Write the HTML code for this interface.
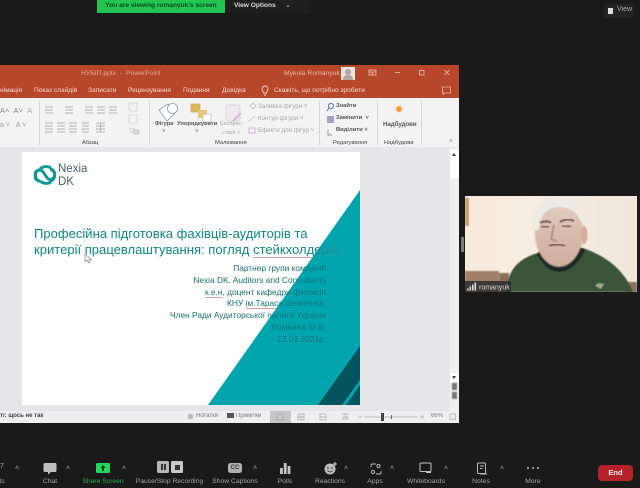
<!DOCTYPE html>
<html><head><meta charset="utf-8"><style>
html,body{margin:0;padding:0;background:#1a1a1a;width:640px;height:488px;overflow:hidden}
body{position:relative;font-family:"Liberation Sans","Noto Sans CJK SC",sans-serif}
.a{position:absolute;white-space:nowrap}
.b{filter:blur(.3px)}
.rt{color:#f3d6cc;font-size:6.6px}
.gt{color:#444;font-size:5.8px}
.dis{color:#a8a8a8;font-size:6.2px}
.tl{color:#a4a4a4;font-size:6.75px;transform:translateX(-50%);top:478px;filter:blur(.3px)}
.car{color:#aaa;font-size:7px;top:465px}
.sep{position:absolute;top:101px;width:1px;height:44px;background:#d6d6d6}
</style></head><body>
<!-- top bar -->
<div class="a" style="left:97px;top:0;width:214px;height:13px;background:#1f1f1f;border-radius:0 0 3px 3px"></div>
<div class="a b" style="left:97px;top:0;width:128px;height:13px;background:#23c552;color:#0b4a1e;font-size:6.6px;font-weight:bold;line-height:12px;text-align:center">You are viewing romanyuk's screen</div>
<div class="a b" style="left:234px;top:0;color:#ddd;font-size:6.6px;font-weight:bold;line-height:12px">View Options</div>
<div class="a" style="left:285px;top:1px;color:#ccc;font-size:7px;line-height:10px">⌄</div>
<div class="a" style="left:604px;top:4px;width:30px;height:14px;background:#242424;border-radius:4px"></div>
<div class="a" style="left:608px;top:8px;width:5px;height:6px;background:#ddd"></div>
<div class="a b" style="left:617px;top:6px;color:#aaa;font-size:7px">View</div>

<!-- window -->
<div class="a" style="left:0;top:65px;width:459px;height:358px;background:#e6e6e6"></div>
<div class="a" style="left:0;top:65px;width:459px;height:33px;background:#b7472a"></div>
<div class="a b" style="left:81px;top:70px;color:#e2a896;font-size:6.8px">НУБІП.pptx &nbsp;-&nbsp; PowerPoint</div>
<div class="a b" style="left:284px;top:70px;color:#eab9a9;font-size:6.8px">Mykola Romanyuk</div>
<div class="a" style="left:341px;top:67px;width:14px;height:13px;background:#e8e4e2"></div>
<svg class="a b" style="left:341px;top:67px" width="14" height="13"><circle cx="7" cy="5" r="3" fill="#b5a5a0"/><path d="M2 13c0-4 2-5 5-5s5 1 5 5z" fill="#b5a5a0"/></svg>
<svg class="a b" style="left:366px;top:68px" width="90" height="12" fill="none" stroke="#eec4b6" stroke-width=".8"><rect x="3" y="2" width="7" height="5"/><path d="M3 4h7M6.500 4v3"/><path d="M29 4.500h5"/><rect x="53.500" y="2.500" width="4.500" height="4.500"/><path d="M78.500 2l5 5M83.500 2l-5 5"/></svg>
<!-- tabs -->
<div class="a b rt" style="left:0;top:87px">німація</div>
<div class="a b rt" style="left:34px;top:87px">Показ слайдів</div>
<div class="a b rt" style="left:88px;top:87px">Записати</div>
<div class="a b rt" style="left:128px;top:87px">Рецензування</div>
<div class="a b rt" style="left:183px;top:87px">Подання</div>
<div class="a b rt" style="left:222px;top:87px">Довідка</div>
<svg class="a b" style="left:260px;top:85px" width="10" height="12" fill="none" stroke="#f3d6cc" stroke-width=".9"><path d="M3.500 8c0-1.500-1.500-2-1.500-4a3 3 0 0 1 6 0c0 2-1.500 2.500-1.500 4zM4 10h2"/></svg>
<div class="a b rt" style="left:274px;top:87px">Скажіть, що потрібно зробити</div>
<svg class="a b" style="left:441px;top:86px" width="12" height="10" fill="none" stroke="#e8b3a2" stroke-width=".8"><path d="M1.500 1h8v6H4L2.500 8.500V7h-1z"/></svg>
<!-- ribbon -->
<div class="a" style="left:0;top:98px;width:459px;height:49px;background:#f3f3f3"></div>
<div class="sep" style="left:39px"></div><div class="sep" style="left:149px"></div><div class="sep" style="left:319px"></div><div class="sep" style="left:377px"></div><div class="sep" style="left:421px"></div>
<!-- font group bits -->
<div class="a b" style="left:0;top:106px;color:#888;font-size:7.5px">А˄ &nbsp;А˅ &nbsp;<span style="color:#aaa">А</span></div>
<div class="a b" style="left:0;top:122px;color:#999;font-size:7px">а ˅ &nbsp; А ˅</div>
<!-- paragraph icons -->
<svg class="a b" style="left:44px;top:104px" width="80" height="30" stroke="#b4b4b4" stroke-width="1" fill="none">
<path d="M1 3h8M1 6h8M1 9h8M21 3h8M21 6h8M21 9h8M41 3h8M41 6h8M41 9h8M53 3h8M53 6h8M53 9h8M65 3h8M65 6h8M65 9h8"/>
<path d="M1 19h8M1 22h8M1 25h8M1 28h8M13 19h8M13 22h8M13 25h8M13 28h8M25 19h8M25 22h8M25 25h8M25 28h8M38 19h7M38 22h7M38 25h7M38 28h7M52 19h9M52 22h9M52 25h9M52 28h9M56.500 19v9"/>
</svg>
<svg class="a b" style="left:126px;top:100px" width="20" height="38" fill="none" stroke="#bbb" stroke-width=".8"><rect x="3" y="3" width="8" height="8" stroke-dasharray="1.500 1"/><rect x="3" y="15" width="8" height="8" stroke-dasharray="1.500 1"/><path d="M3 29h6M3 32h6"/><rect x="8" y="30" width="5" height="4" fill="#ddd"/></svg>
<div class="a b gt" style="left:82px;top:140px">Абзац</div>
<!-- drawing -->
<svg class="a b" style="left:154px;top:101px" width="92" height="28"><path d="M5 9l9-6 8 8-9 9z" fill="#fff" stroke="#8a9ab0" stroke-width=".8"/><circle cx="18.500" cy="7.500" r="5" fill="#fff" stroke="#8a9ab0" stroke-width=".8"/><rect x="37" y="3" width="9" height="8" fill="#d9b95f" stroke="#c9a64c" stroke-width=".6"/><rect x="44" y="9" width="9" height="8" fill="#e6c878"/><rect x="49" y="13" width="8" height="8" fill="#fff" stroke="#aaa" stroke-width=".6"/><rect x="72" y="4" width="14" height="16" rx="2" fill="#f1e9f0" stroke="#ccc" stroke-width=".7"/><path d="M79 20l8-8" stroke="#d4b8d0" stroke-width="2"/></svg>
<div class="a b gt" style="left:155px;top:121px;font-weight:bold;color:#555;font-size:5.6px">Фігури</div>
<div class="a b gt" style="left:177px;top:121px;font-weight:bold;color:#555;font-size:5.8px">Упорядкувати</div>
<div class="a b dis" style="left:220px;top:121px;font-size:5.8px">Експрес-</div>
<div class="a b dis" style="left:222px;top:130px;font-size:5.8px">стилі ˅</div>
<div class="a b" style="left:162px;top:129px;font-size:6px;color:#666">˅</div>
<div class="a b" style="left:195px;top:129px;font-size:6px;color:#666">˅</div>
<div class="a b dis" style="left:258px;top:103px">Заливка фігури ˅</div>
<div class="a b dis" style="left:258px;top:115px">Контур фігури ˅</div>
<div class="a b dis" style="left:258px;top:127px">Ефекти для фігур ˅</div>
<svg class="a b" style="left:248px;top:101px" width="9" height="36" fill="none" stroke="#bbb" stroke-width=".8"><path d="M2 5l3-3 3 3-3 3z"/><path d="M1 20l6-5"/><rect x="1" y="27" width="6" height="5" stroke="#caa6c6"/></svg>
<div class="a b gt" style="left:215px;top:140px">Малювання</div>
<!-- editing -->
<svg class="a b" style="left:326px;top:102px" width="10" height="36" fill="none"><circle cx="5" cy="4" r="2.500" stroke="#3f6fb5"/><path d="M3 6L1 9" stroke="#3f6fb5"/><rect x="1" y="14" width="7" height="7" fill="#a8a0c8"/><path d="M2 27v7l2-2 2 2" stroke="#888" stroke-width=".7"/></svg>
<div class="a b gt" style="left:336px;top:103px;font-weight:bold;color:#555">Знайти</div>
<div class="a b gt" style="left:336px;top:115px;font-weight:bold;color:#555">Замінити &nbsp;˅</div>
<div class="a b gt" style="left:336px;top:127px;font-weight:bold;color:#555">Виділити ˅</div>
<div class="a b gt" style="left:333px;top:140px">Редагування</div>
<div class="a" style="left:396px;top:106px;width:6px;height:6px;background:#f59a30;border-radius:50%;filter:blur(.5px)"></div>
<div class="a b gt" style="left:383px;top:121px;font-weight:bold;color:#555;font-size:6.1px">Надбудови</div>
<div class="a b gt" style="left:384px;top:140px">Надбудови</div>
<div class="a" style="left:449px;top:139px;color:#777;font-size:6px">˄</div>
<!-- main area -->
<div class="a" style="left:0;top:147px;width:459px;height:264px;background:#e6e6e8"></div>
<!-- scrollbar -->
<div class="a" style="left:450px;top:148px;width:9px;height:263px;background:#f0f0f0"></div>
<div class="a" style="left:450px;top:150px;width:9px;height:28px;background:#fff"></div>
<div class="a" style="left:452px;top:151px;width:0;height:0;border:2.500px solid transparent;border-bottom:3px solid #444"></div>
<div class="a" style="left:450px;top:373px;width:9px;height:9px;background:#fff"></div>
<div class="a" style="left:452px;top:376px;width:0;height:0;border:2.500px solid transparent;border-top:3px solid #444"></div>
<div class="a" style="left:452px;top:383px;width:5px;height:7px;background:#777;filter:blur(.5px)"></div>
<div class="a" style="left:452px;top:392px;width:5px;height:7px;background:#777;filter:blur(.5px)"></div>
<!-- slide -->
<div class="a" style="left:22px;top:152px;width:338px;height:253px;background:#fff"></div>
<!-- logo -->
<svg class="a" style="left:34px;top:164px;filter:blur(.3px)" width="22" height="22" fill="none" stroke="#0f9a99" stroke-width="3"><path d="M6 17a5.500 5.500 0 0 1 0-11c4 0 6 9.500 10 9.500a5 5 0 0 0 0-10"/><path d="M6 17c4 3 8 3 11 1M6 5c3-3 8-3 11-1"/><path d="M16 5c3 0 4.500 2.500 4.500 6s-1.500 6-4.500 6"/><path d="M6 6C3 6 1.500 8 1.500 11s1.500 6 4.500 6"/></svg>
<div class="a b" style="left:58px;top:163px;color:#4a5f68;font-size:11.5px;line-height:12.5px">Nexia<br>DK</div>
<!-- title -->
<div class="a b" style="left:34px;top:226px;color:#0f8682;font-size:13.05px;line-height:15.5px">Професійна підготовка фахівців-аудиторів та<br>критерії працевлаштування: погляд <span style="border-bottom:1px solid #e0a0a0">стейкхолдерів</span>.</div>
<!-- subtitle -->
<div class="a b" style="right:314px;top:263px;color:#17706e;font-size:8.35px;line-height:11.8px;text-align:right">Партнер групи компаній<br>Nexia DK. Auditors and Consultants<br><span style="border-bottom:1px solid #e0a0a0">к.е.н</span>, доцент кафедри фінансів<br>КНУ <span style="border-bottom:1px solid #e0a0a0">ім.Тараса</span> Шевченка,<br>Член Ради Аудиторської палати України<br>Романюк М.В.<br>12.03.2024р.</div>
<!-- teal area with recoloured text -->
<div class="a" style="left:0;top:0;width:640px;height:488px;clip-path:polygon(360px 190px,208px 405px,360px 405px)">
<div class="a" style="left:0;top:0;width:640px;height:488px;background:#00a5ad"></div>
<div class="a b" style="right:314px;top:263px;color:#127482;font-size:8.35px;line-height:11.8px;text-align:right">Партнер групи компаній<br>Nexia DK. Auditors and Consultants<br>к.е.н, доцент кафедри фінансів<br>КНУ ім.Тараса Шевченка,<br>Член Ради Аудиторської палати України<br>Романюк М.В.<br>12.03.2024р.</div>
<div class="a b" style="left:34px;top:226px;color:#2c8a9a;font-size:13.05px;line-height:15.5px">Професійна підготовка фахівців-аудиторів та<br>критерії працевлаштування: погляд стейкхолдерів.</div>
</div>
<!-- dark corner goes above the teal layer -->
<svg class="a" style="left:22px;top:152px;filter:blur(.25px)" width="338" height="253">
<polygon points="338,194 296,253 338,253" fill="#04545f"/>
<polygon points="338,228 320,253 324,253 338,233" fill="#00a5ad"/>
</svg>
<!-- cursor -->
<svg class="a" style="left:84px;top:253px" width="9" height="11"><path d="M1 1v8l2-2 2 3 1-1-1-2.500h2.500z" fill="#f4f4f4" stroke="#777" stroke-width=".6"/></svg>
<!-- status -->
<div class="a" style="left:0;top:411px;width:459px;height:12px;background:#efefef"></div>
<div class="a b" style="left:0;top:413px;color:#444;font-size:6px;font-weight:bold">ті: щось не так</div>
<div class="a b" style="left:196px;top:413px;color:#777;font-size:6px">Нотатки</div>
<div class="a" style="left:188px;top:414px;width:5px;height:5px;background:#bbb;filter:blur(.5px)"></div>
<div class="a" style="left:227px;top:413px;width:7px;height:5px;background:#555;filter:blur(.3px)"></div>
<div class="a b" style="left:236px;top:413px;color:#777;font-size:6px">Примітки</div>
<div class="a" style="left:270px;top:411px;width:21px;height:12px;background:#c6c6c6"></div>
<svg class="a b" style="left:270px;top:411px" width="180" height="12" fill="none" stroke="#aaa" stroke-width=".7"><rect x="7" y="3" width="6" height="6"/><rect x="28" y="3" width="6" height="6"/><path d="M31 3v6M28 6h6"/><rect x="50" y="3" width="6" height="6"/><path d="M50 6h6"/><path d="M72 3h7M75.500 3v3M73 6h5v2h-5z"/><path d="M88 6h4M95 6h52M150 6h4M152 4v4"/></svg>
<div class="a" style="left:381px;top:413px;width:3px;height:8px;background:#444"></div>
<div class="a" style="left:391px;top:415px;width:1px;height:4px;background:#666"></div>
<div class="a b" style="left:431px;top:413px;color:#777;font-size:6px">66%</div>
<svg class="a b" style="left:449px;top:413px" width="8" height="8" fill="none" stroke="#aaa" stroke-width=".7"><rect x="1" y="1" width="5.500" height="5.500"/></svg>

<!-- divider -->
<div class="a" style="left:461px;top:237px;width:3px;height:15px;background:#7a7a7a;filter:blur(.3px)"></div>
<!-- video -->
<svg class="a" style="left:465px;top:196px" width="172" height="96" viewBox="0 0 172 96">
<defs><linearGradient id="w" x1="0" x2="1"><stop offset="0" stop-color="#f8eadc"/><stop offset=".4" stop-color="#f7ede2"/><stop offset="1" stop-color="#f1e6da"/></linearGradient>
<linearGradient id="sk" x1="0" y1="0" x2="0" y2="1"><stop offset="0" stop-color="#e4d2c6"/><stop offset=".5" stop-color="#d8bbab"/><stop offset="1" stop-color="#cfae9f"/></linearGradient>
<filter id="f"><feGaussianBlur stdDeviation=".9"/></filter><filter id="g"><feGaussianBlur stdDeviation=".6"/></filter></defs>
<rect width="172" height="96" fill="url(#w)"/>
<rect x="0" y="2" width="4" height="28" fill="#c8a060" filter="url(#g)"/>
<rect x="0" y="75" width="34" height="21" fill="#a0806a" filter="url(#g)"/>
<rect x="34" y="77" width="10" height="19" fill="#8d7058" filter="url(#g)"/>
<rect x="160" y="86" width="12" height="10" fill="#8a6e60" filter="url(#g)"/>
<path d="M41 96 C43 76 50 63 76 56 L118 52 C140 60 158 72 168 96Z" fill="#3a5539" filter="url(#g)"/>
<path d="M72 58 C84 82 106 82 120 54 L108 48 L84 48Z" fill="#1a2621" filter="url(#g)"/>
<ellipse cx="94" cy="37" rx="24" ry="34" fill="url(#sk)" filter="url(#f)"/>
<path d="M69 34 C63 16 76 2 94 1 C108 0 118 8 120 30 L115 24 C111 14 102 11 92 11 C81 12 75 20 74 34Z" fill="#eeebe4" filter="url(#g)"/>
<ellipse cx="119" cy="39" rx="3.500" ry="9" fill="#d2b0a0" filter="url(#g)"/>
<path d="M75 27c4-2 8-2 11 0M95 26c5-3 10-3 14-1" stroke="#7a5c50" stroke-width="2" fill="none" filter="url(#g)"/>
<path d="M76 31h8M97 30h9" stroke="#5c4038" stroke-width="1.500" fill="none" filter="url(#g)"/>
<path d="M89 29l-3 14 6 2" stroke="#a98878" stroke-width="1.500" fill="none" filter="url(#g)"/>
<path d="M84 50c5-2 12-2 16 0" stroke="#8a5a50" stroke-width="2" fill="none" filter="url(#g)"/>
<path d="M130 90l3-3 6 1-3 5z" fill="#a8a888" filter="url(#g)"/>
<rect x="0" y="85" width="46" height="11" fill="#2c2c2c" opacity=".85"/>
<path d="M2 94.500h1.600v-2H2zM4.500 94.500h1.600v-4H4.500zM7 94.500h1.600v-6H7zM9.500 94.500h1.600v-8H9.500z" fill="#ddd"/>
<text x="14" y="93.500" fill="#ddd" font-size="7" font-family="Liberation Sans">romanyuk</text>
</svg>

<!-- toolbar -->
<div class="a" style="left:0;top:450px;width:640px;height:38px;background:#1a1a1a"></div>
<div class="a tl" style="left:2px">ts</div>
<div class="a" style="left:0;top:463px;color:#aaa;font-size:7px">7</div>
<div class="a car" style="left:15px">˄</div>
<svg class="a b" style="left:43px;top:462px" width="14" height="13"><path d="M2 1h10a1.500 1.500 0 0 1 1.500 1.500v6A1.500 1.500 0 0 1 12 10H8l-3 2.500V10H2A1.500 1.500 0 0 1 .5 8.500v-6A1.500 1.500 0 0 1 2 1z" fill="#bfbfbf"/></svg>
<div class="a tl" style="left:50px">Chat</div>
<div class="a car" style="left:66px">˄</div>
<div class="a" style="left:96px;top:463px;width:14px;height:10px;background:#23d95c;border-radius:1.500px"></div>
<svg class="a" style="left:96px;top:463px" width="14" height="10"><path d="M7 2l2.500 3H8v3H6V5H4.500z" fill="#0d3a1a"/></svg>
<div class="a tl" style="left:103px;color:#22b14c">Share Screen</div>
<div class="a car" style="left:122px">˄</div>
<div class="a" style="left:157px;top:461px;width:12px;height:12px;background:#b5b5b5;border-radius:1.500px"></div>
<div class="a" style="left:161px;top:464px;width:1.500px;height:6px;background:#333"></div><div class="a" style="left:164px;top:464px;width:1.500px;height:6px;background:#333"></div>
<div class="a" style="left:171px;top:461px;width:12px;height:12px;background:#c9c9c9;border-radius:1.500px"></div>
<div class="a" style="left:174.500px;top:464.500px;width:5px;height:5px;background:#333"></div>
<div class="a tl" style="left:169.500px">Pause/Stop Recording</div>
<div class="a" style="left:228px;top:463px;width:14px;height:10px;background:#b0b0b0;border-radius:2.500px;color:#333;font-size:6px;font-weight:bold;text-align:center;line-height:10px">CC</div>
<div class="a tl" style="left:235px">Show Captions</div>
<div class="a car" style="left:253px">˄</div>
<svg class="a b" style="left:279px;top:462px" width="12" height="12" fill="#c4c4c4"><rect x="1" y="6" width="2.800" height="6"/><rect x="4.800" y="1" width="2.800" height="11"/><rect x="8.600" y="4" width="2.800" height="8"/></svg>
<div class="a tl" style="left:285px">Polls</div>
<svg class="a b" style="left:323px;top:461px" width="15" height="14"><circle cx="7" cy="8" r="5.500" fill="#bdbdbd"/><circle cx="5" cy="7" r=".8" fill="#222"/><circle cx="9" cy="7" r=".8" fill="#222"/><path d="M4.500 9.500c1.500 2 3.500 2 5 0" stroke="#222" stroke-width=".7" fill="none"/><path d="M12 1v4M10 3h4" stroke="#ccc"/></svg>
<div class="a tl" style="left:330px">Reactions</div>
<div class="a car" style="left:344px">˄</div>
<svg class="a b" style="left:370px;top:463px" width="12" height="12" fill="none" stroke="#bbb" stroke-width="1"><path d="M1 4V2.500A1.500 1.500 0 0 1 2.500 1H6M11 8v1.500A1.500 1.500 0 0 1 9.500 11H6"/><circle cx="8.500" cy="3" r="1.600"/><circle cx="3" cy="9" r="1.600"/></svg>
<div class="a tl" style="left:375px">Apps</div>
<div class="a car" style="left:390px">˄</div>
<svg class="a b" style="left:419px;top:462px" width="14" height="12" fill="none" stroke="#c4c4c4" stroke-width="1"><rect x="1" y="1" width="11" height="8.500" rx="1"/><path d="M7 10h5" stroke-width="2"/></svg>
<div class="a tl" style="left:426px">Whiteboards</div>
<div class="a car" style="left:444px">˄</div>
<svg class="a b" style="left:476px;top:462px" width="12" height="13" fill="none" stroke="#bbb" stroke-width="1"><rect x="1.500" y="1" width="8" height="10.500" rx="1"/><path d="M4 4h4M4 6.500h2.500M4 12h7"/></svg>
<div class="a tl" style="left:481px">Notes</div>
<div class="a car" style="left:500px">˄</div>
<svg class="a b" style="left:526px;top:466px" width="14" height="4" fill="#bbb"><circle cx="2" cy="2" r="1"/><circle cx="7" cy="2" r="1"/><circle cx="12" cy="2" r="1"/></svg>
<div class="a tl" style="left:533px">More</div>
<div class="a b" style="left:598px;top:465px;width:35px;height:16px;background:#b5222a;border-radius:4px;color:#eee;font-size:7.5px;font-weight:bold;line-height:16px;text-align:center">End</div>
</body></html>
